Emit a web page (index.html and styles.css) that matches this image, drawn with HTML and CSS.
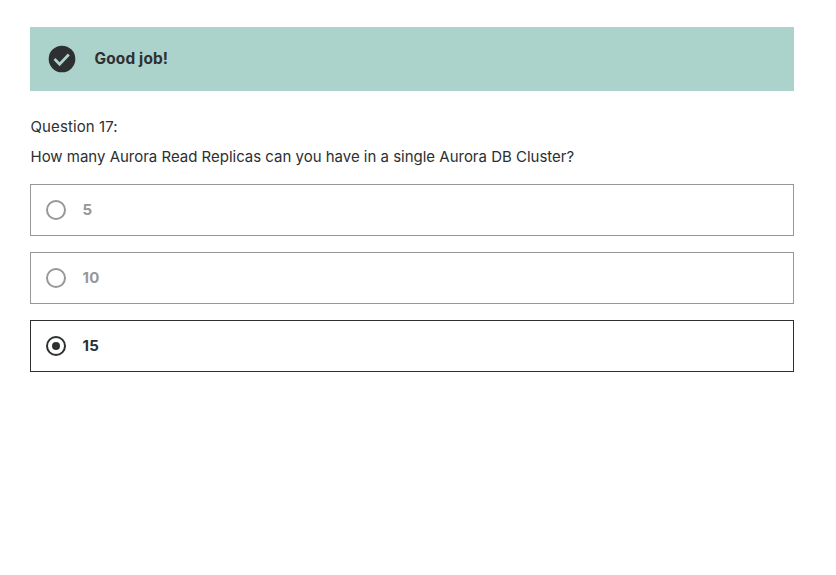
FILE: index.html
```html
<!DOCTYPE html>
<html lang="en">
<head>
<meta charset="utf-8">
<title>Question 17</title>
<link rel="stylesheet" href="styles.css">
</head>
<body>
<main class="quiz">
  <div class="banner" role="status">
    <svg class="banner-icon" viewBox="0 0 32 32" aria-hidden="true">
      <circle cx="16" cy="16" r="13.33" fill="#2d2f31"/>
      <path d="M8.5 16l5.1 5.2 9.2-9.7" fill="none" stroke="#acd2cc" stroke-width="2.7"/>
    </svg>
    <span class="banner-text">Good job!</span>
  </div>
  <div class="question-number"><span>Question 17:</span></div>
  <div class="question-text"><span>How many Aurora Read Replicas can you have in a single Aurora DB Cluster?</span></div>
  <ul class="answers">
    <li class="answer"><span class="radio"></span><span class="label">5</span></li>
    <li class="answer"><span class="radio"></span><span class="label">10</span></li>
    <li class="answer selected"><span class="radio"></span><span class="label">15</span></li>
  </ul>
</main>
</body>
</html>
```
FILE: styles.css
```css
* { box-sizing: border-box; }
body {
  margin: 0;
  background: #fff;
  color: #2d2f31;
  font-family: Inter, "Liberation Sans", sans-serif;
  font-size: 15px;
}
.quiz { width: 764px; margin: 27px 0 0 30px; }
.banner {
  display: flex;
  align-items: center;
  gap: 16px;
  height: 64px;
  padding: 0 16px;
  background: #acd2cc;
}
.banner-icon { width: 32px; height: 32px; }
.banner-text { padding: 0 0 2px 0.5px; font-weight: 700; font-size: 15.4px; letter-spacing: 0.16px; }
.question-number { margin-top: 24px; padding-left: 0.5px; line-height: 24px; letter-spacing: 0.1px; }
.question-text { margin-top: 6px; padding-left: 0.5px; line-height: 24px; white-space: nowrap; letter-spacing: -0.01px; }
.answers {
  display: flex;
  flex-direction: column;
  gap: 16px;
  margin: 15px 0 0;
  padding: 0;
  list-style: none;
}
.answer {
  display: flex;
  align-items: center;
  gap: 16px;
  height: 52px;
  padding: 0 15px;
  border: 1px solid #969798;
  color: #969798;
  font-weight: 700;
}
.label { padding: 0 0 2px 0.5px; letter-spacing: 0.2px; }
.radio {
  display: flex;
  align-items: center;
  justify-content: center;
  width: 20px;
  height: 20px;
  border: 2px solid currentColor;
  border-radius: 50%;
}
.selected { border-color: #2d2f31; color: #2d2f31; }
.selected .radio::after {
  content: "";
  width: 8px;
  height: 8px;
  border-radius: 50%;
  background: currentColor;
}
```
